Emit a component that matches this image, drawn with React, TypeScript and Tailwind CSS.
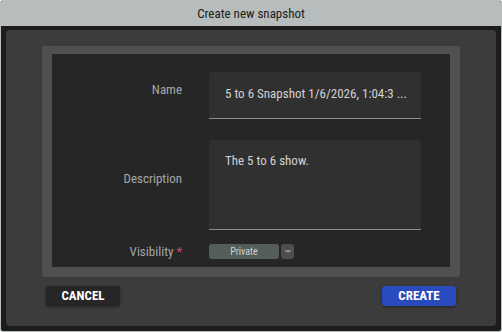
export default function App() {
  return (
    <div className="w-[502px] h-[332px] font-['Roboto',sans-serif] font-stretch-[80%] bg-[#b7bcbc] p-px rounded-[3px]">
      <div className="flex flex-col h-full bg-[#1c1c1c] rounded-[2px] overflow-hidden">
        <div className="h-[25px] shrink-0 bg-[#b7bcbc] flex items-center justify-center text-[13px] text-[#1c1c1c]">
          Create new snapshot
        </div>
        <div className="flex-1 px-[5px] pt-[4px] pb-[5px]">
          <div className="h-full bg-[#3c3c3c] rounded-[4px] pt-[16px] px-[36px]">
            <div className="bg-[#505050] rounded-[3px] pt-[8px] px-[10px] pb-[10px]">
              <div className="bg-[#262626] h-[213px] pt-[18px]">
                <div className="grid grid-cols-[130px_212px] gap-x-[27px] items-center">
                  <div className="text-right text-[13px] text-[#a4a8a8] self-start pt-[8px]">Name</div>
                  <div className="h-[47px] bg-[#303030] rounded-t-[4px] border-b border-[#8c8c8c] pl-[16px] pr-[10px] pt-[12px] text-[13px] text-[#d2d2d2] whitespace-nowrap overflow-hidden">
                    5 to 6 Snapshot 1/6/2026, 1:04:3 ...
                  </div>
                  <div className="col-span-2 h-[21px]" />
                  <div className="text-right text-[13px] text-[#a4a8a8] self-start pt-[29px]">Description</div>
                  <div className="h-[90px] bg-[#303030] rounded-t-[4px] border-b border-[#8c8c8c] pl-[16px] pt-[11px] text-[13px] text-[#d2d2d2]">
                    The 5 to 6 show.
                  </div>
                  <div className="col-span-2 h-[12px]" />
                  <div className="text-right text-[13px] text-[#a4a8a8]">
                    Visibility <span className="text-[#d24a6a]">*</span>
                  </div>
                  <div className="flex gap-[2px] h-[15px]">
                    <div className="w-[70px] bg-[#555d5b] rounded-[3px] flex items-center justify-center text-[10px] text-[#cfd3d3]">
                      Private
                    </div>
                    <div className="w-[13px] bg-[#4e4e4e] rounded-[3px] flex items-center justify-center">
                      <div className="w-0 h-0 border-l-[4px] border-r-[4px] border-t-[3px] border-l-transparent border-r-transparent border-t-[#8a8a8a]" />
                    </div>
                  </div>
                </div>
              </div>
            </div>
            <div className="flex justify-between px-[4px] pt-[9px]">
              <button className="w-[74px] h-[20px] bg-[#262626] rounded-[3px] text-white text-[13px] font-bold shadow-[0_1px_3px_rgba(0,0,0,0.4)]">
                CANCEL
              </button>
              <button className="w-[74px] h-[20px] bg-[#2a4bbd] rounded-[3px] text-white text-[13px] font-bold shadow-[0_1px_3px_rgba(0,0,0,0.4)]">
                CREATE
              </button>
            </div>
          </div>
        </div>
      </div>
    </div>
  )
}
